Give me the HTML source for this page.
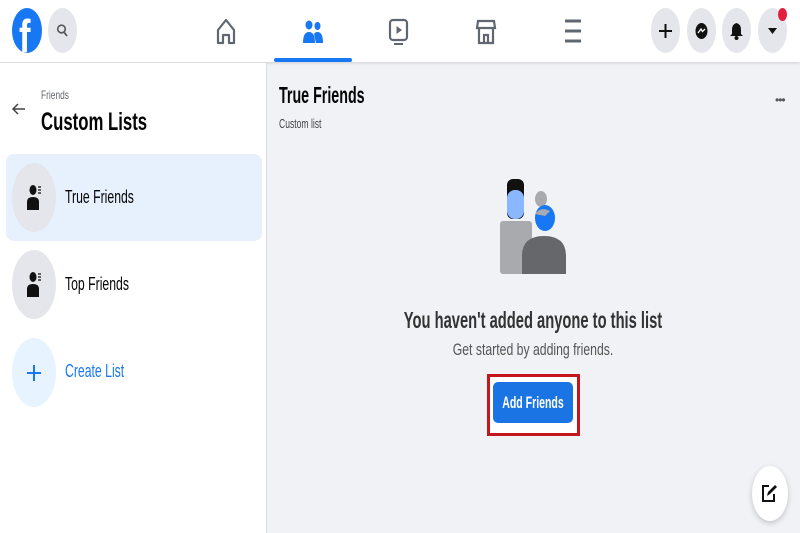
<!DOCTYPE html>
<html><head><meta charset="utf-8"><style>
*{margin:0;padding:0;box-sizing:border-box}
body{width:800px;height:533px;overflow:hidden;background:#f0f2f5;font-family:"Liberation Sans",sans-serif;position:relative}
.a{position:absolute}
.t{position:absolute;white-space:nowrap;transform:scaleX(.7);transform-origin:left center}
.c{position:absolute;white-space:nowrap;transform:scaleX(.7);transform-origin:center;text-align:center}
.el{position:absolute;border-radius:50%}
</style></head><body>
<div class="a" style="left:0;top:0;width:800px;height:62px;background:#fff;box-shadow:0 1px 3px rgba(0,0,0,.15)"></div>
<div class="a" style="left:0;top:63px;width:267px;height:470px;background:#fff;border-right:1px solid #dadde1"></div>
<!-- logo -->
<div class="el" style="left:12px;top:8px;width:30px;height:45px;background:#1877f2"></div>
<div class="a" style="left:19px;top:13px;font:bold 46px/46px 'Liberation Sans';color:#fff;transform:scaleX(.75);transform-origin:left">f</div>
<div class="el" style="left:48px;top:8px;width:29px;height:45px;background:#e4e6eb"></div>
<svg class="a" style="left:56px;top:23px" width="13" height="16" viewBox="0 0 13 16"><circle cx="5.5" cy="6" r="3.8" fill="none" stroke="#555" stroke-width="1.6"/><path d="M8.3 9.5L11 13" stroke="#555" stroke-width="1.8"/></svg>
<!-- nav -->
<svg class="a" style="left:215px;top:17px" width="22" height="29" viewBox="0 0 22 29"><path d="M3 13L11 3L19 13V26H14V18H8V26H3Z" fill="none" stroke="#606770" stroke-width="2.2" stroke-linejoin="round"/></svg>
<svg class="a" style="left:302px;top:18px" width="22" height="26" viewBox="0 0 22 26"><ellipse cx="7" cy="7" rx="3.5" ry="4.5" fill="#1877f2"/><ellipse cx="15.5" cy="8" rx="3" ry="4" fill="#1877f2"/><path d="M1 25Q1 14 7 14Q13 14 13 25Z" fill="#1877f2"/><path d="M12 16Q13 14 15.5 14Q21 14 21 25H14Z" fill="#1877f2"/></svg>
<div class="a" style="left:274px;top:58px;width:78px;height:4px;background:#1877f2;border-radius:2px"></div>
<svg class="a" style="left:388px;top:17px" width="22" height="30" viewBox="0 0 22 30"><rect x="2" y="3" width="17" height="20" rx="3" fill="none" stroke="#606770" stroke-width="2.2"/><path d="M8.5 9V17L14 13Z" fill="#606770"/><path d="M6 27H15" stroke="#606770" stroke-width="2"/></svg>
<svg class="a" style="left:475px;top:17px" width="22" height="30" viewBox="0 0 22 30"><path d="M3 4H19L20 11H2Z" fill="none" stroke="#606770" stroke-width="2.2"/><path d="M4 11V26H18V11M9 26V18H13V26" fill="none" stroke="#606770" stroke-width="2.2"/></svg>
<svg class="a" style="left:564px;top:18px" width="18" height="26" viewBox="0 0 18 26"><path d="M1 3H17M1 13H17M1 23H17" stroke="#606770" stroke-width="3"/></svg>
<div class="el" style="left:651px;top:8px;width:29px;height:45px;background:#e4e6eb"></div>
<div class="el" style="left:687px;top:8px;width:29px;height:45px;background:#e4e6eb"></div>
<div class="el" style="left:722px;top:8px;width:29px;height:45px;background:#e4e6eb"></div>
<div class="el" style="left:758px;top:8px;width:29px;height:45px;background:#e4e6eb"></div>
<svg class="a" style="left:658px;top:22px" width="15" height="18"><path d="M7.5 2V16M1 9H14" stroke="#111" stroke-width="2"/></svg>
<svg class="a" style="left:694px;top:21px" width="15" height="20"><ellipse cx="7.5" cy="10" rx="6" ry="8" fill="#111"/><path d="M4 12L7 8L8.5 10.5L11 8" fill="none" stroke="#fff" stroke-width="1.3"/></svg>
<svg class="a" style="left:729px;top:21px" width="15" height="20"><path d="M7.5 2Q12 3 12 9V13L14 15H1L3 13V9Q3 3 7.5 2Z" fill="#111"/><ellipse cx="7.5" cy="17" rx="2" ry="2" fill="#111"/></svg>
<svg class="a" style="left:767px;top:27px" width="11" height="8"><path d="M1 1H10L5.5 7Z" fill="#111"/></svg>
<div class="el" style="left:778px;top:8px;width:9px;height:13px;background:#e41e3f"></div>
<!-- left -->
<svg class="a" style="left:11px;top:101px" width="16" height="16"><path d="M14 8H2M7 3L2 8L7 13" fill="none" stroke="#444" stroke-width="1.5"/></svg>
<div class="t" style="left:41px;top:88px;font-size:12px;color:#65676b">Friends</div>
<div class="t" style="left:41px;top:108px;font-size:25px;font-weight:bold;color:#050505;transform:scaleX(.67)">Custom Lists</div>
<div class="a" style="left:6px;top:154px;width:256px;height:87px;background:#e7f0fd;border-radius:8px"></div>
<div class="el" style="left:12px;top:163px;width:44px;height:69px;background:#e4e6eb"></div>
<div class="el" style="left:12px;top:250px;width:44px;height:69px;background:#e4e6eb"></div>
<div class="el" style="left:12px;top:338px;width:44px;height:69px;background:#e7f3ff"></div>
<svg class="a" style="left:25px;top:184px" width="18" height="28"><ellipse cx="8" cy="6" rx="3.5" ry="5" fill="#111"/><path d="M2 26V18Q2 13 8 13Q14 13 14 18V26Z" fill="#111"/><path d="M13 3H16M13 6H16M13 9H16" stroke="#111" stroke-width="1.3"/></svg>
<svg class="a" style="left:25px;top:271px" width="18" height="28"><ellipse cx="8" cy="6" rx="3.5" ry="5" fill="#111"/><path d="M2 26V18Q2 13 8 13Q14 13 14 18V26Z" fill="#111"/><path d="M13 3H16M13 6H16M13 9H16" stroke="#111" stroke-width="1.3"/></svg>
<svg class="a" style="left:26px;top:363px" width="16" height="20"><path d="M8 2V18M1 10H15" stroke="#1877f2" stroke-width="2"/></svg>
<div class="t" style="left:65px;top:187px;font-size:18px;color:#050505;transform:scaleX(.68)">True Friends</div>
<div class="t" style="left:65px;top:274px;font-size:18px;color:#050505;transform:scaleX(.68)">Top Friends</div>
<div class="t" style="left:65px;top:361px;font-size:18px;color:#1877f2;transform:scaleX(.68)">Create List</div>
<!-- right -->
<div class="t" style="left:279px;top:82px;font-size:23px;font-weight:bold;color:#050505;transform:scaleX(.62)">True Friends</div>
<div class="t" style="left:279px;top:116px;font-size:13px;color:#444;transform:scaleX(.66)">Custom list</div>
<div class="a" style="left:775px;top:93px;font-size:12px;color:#555;letter-spacing:-1px">•••</div>
<svg class="a" style="left:500px;top:178px" width="68" height="96" viewBox="0 0 68 96"><rect x="7" y="1" width="17" height="40" rx="6" fill="#111"/><rect x="7" y="12" width="17" height="29" rx="8" fill="#8ab7ff"/><rect x="0" y="43" width="32" height="53" rx="3" fill="#a8aaad"/><ellipse cx="41" cy="21" rx="6" ry="8" fill="#a8aaad"/><ellipse cx="45" cy="40" rx="10" ry="13" fill="#1877f2"/><path d="M35 36Q41 28 50 33L45 38Z" fill="#a8aaad"/><path d="M22 96V78Q22 58 44 58Q66 58 66 78V96Z" fill="#65676b"/></svg>
<div class="c" style="left:283px;width:500px;top:307px;font-size:23px;font-weight:bold;color:#333;transform:scaleX(.64)">You haven't added anyone to this list</div>
<div class="c" style="left:383px;width:300px;top:340px;font-size:17px;color:#555;transform:scaleX(.72)">Get started by adding friends.</div>
<div class="a" style="left:487px;top:374px;width:93px;height:62px;border:3px solid #c4161c;background:#fff"></div>
<div class="a" style="left:493px;top:382px;width:80px;height:41px;background:#1b74e4;border-radius:5px"></div>
<div class="c" style="left:483px;width:100px;top:393px;font-size:17px;color:#fff;font-weight:bold;transform:scaleX(.62)">Add Friends</div>
<div class="el" style="left:752px;top:466px;width:36px;height:55px;background:#fff;box-shadow:0 2px 6px rgba(0,0,0,.2)"></div>
<svg class="a" style="left:760px;top:482px" width="18" height="22"><path d="M9 4H3V19H14V12" fill="none" stroke="#111" stroke-width="2"/><path d="M7 14L8 10L15 3L17 5L10 12Z" fill="#111"/></svg>
</body></html>
